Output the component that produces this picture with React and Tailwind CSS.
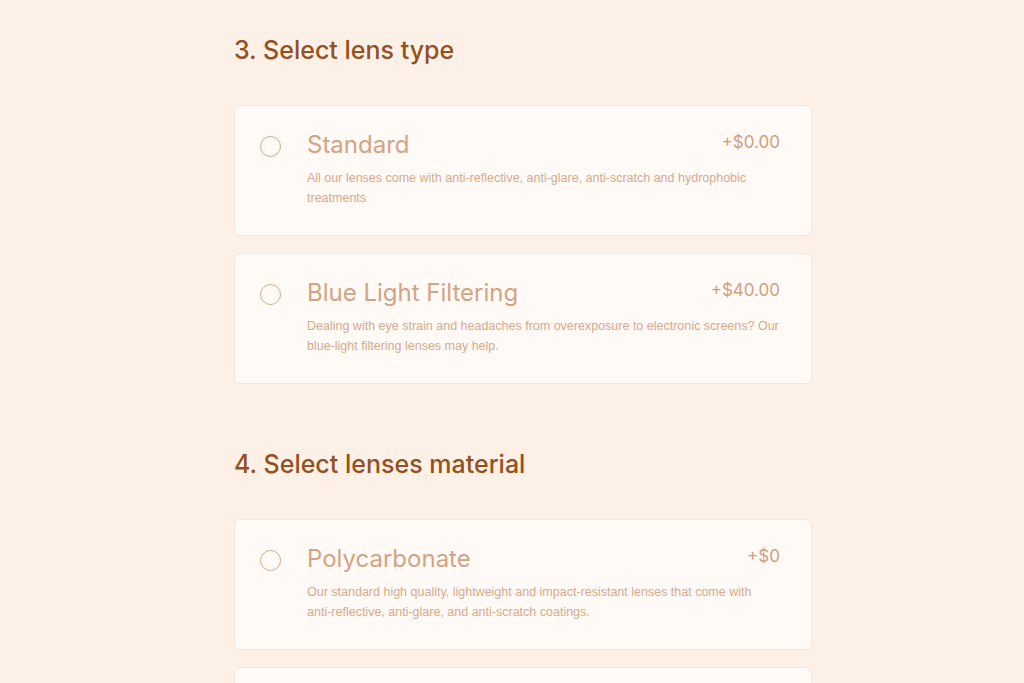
const sections = [
  {
    title: "3. Select lens type",
    options: [
      {
        name: "Standard",
        price: "+$0.00",
        text: "All our lenses come with anti-reflective, anti-glare, anti-scratch and hydrophobic treatments",
      },
      {
        name: "Blue Light Filtering",
        price: "+$40.00",
        text: "Dealing with eye strain and headaches from overexposure to electronic screens? Our blue-light filtering lenses may help.",
      },
    ],
  },
  {
    title: "4. Select lenses material",
    options: [
      {
        name: "Polycarbonate",
        price: "+$0",
        text: (
          <>
            Our standard high quality, lightweight and impact-resistant lenses that come with{" "}
            <span className="whitespace-nowrap">anti-reflective,</span> anti-glare, and anti-scratch
            coatings.
          </>
        ),
      },
      {
        name: "High-Index",
        price: "+$50",
        text: "Thinner and lighter lenses for stronger prescriptions.",
      },
    ],
  },
];

const OptionCard = ({ option }) => (
  <label className="flex gap-[26px] rounded-md border border-[#f6e5d8] bg-[#fffaf5] pl-[25px] pr-[31px] pt-[23px] pb-[27px] cursor-pointer">
    <span className="mt-[7px] h-[21px] w-[21px] shrink-0 rounded-full border-[1.5px] border-[#cfa891] bg-[#fffaf5]"></span>
    <div className="flex-1">
      <div className="flex items-start justify-between">
        <h3 className="font-['Inter',sans-serif] text-[24px] leading-[32px] text-[#d3a385]">
          {option.name}
        </h3>
        <span className="font-['Inter',sans-serif] text-[17px] leading-[26px] text-[#d09e80]">
          {option.price}
        </span>
      </div>
      <p className="mt-[7px] text-[12.5px] leading-[20px] text-[#d7a98d]">{option.text}</p>
    </div>
  </label>
);

export default function App() {
  return (
    <div
      className="min-h-screen bg-[#fdf1e7] pt-[34px]"
      style={{ fontFamily: "'Liberation Sans', Arial, sans-serif" }}
    >
      <div className="ml-[234px] w-[578px]">
        {sections.map((section, i) => (
          <section key={section.title} className={i > 0 ? "mt-[64px]" : ""}>
            <h2 className="font-['Inter',sans-serif] text-[25px] leading-[32px] font-medium text-[#94501f]">
              {section.title}
            </h2>
            <div className="mt-[39px] flex flex-col gap-[17px]">
              {section.options.map((option) => (
                <OptionCard key={option.name} option={option} />
              ))}
            </div>
          </section>
        ))}
      </div>
    </div>
  );
}
